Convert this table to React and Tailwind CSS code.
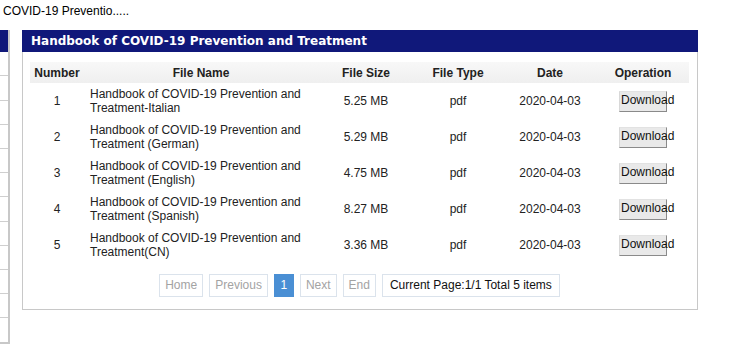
import React from "react";

const rows = [
  { n: 1, name: "Handbook of COVID-19 Prevention and Treatment-Italian", size: "5.25 MB" },
  { n: 2, name: "Handbook of COVID-19 Prevention and Treatment (German)", size: "5.29 MB" },
  { n: 3, name: "Handbook of COVID-19 Prevention and Treatment (English)", size: "4.75 MB" },
  { n: 4, name: "Handbook of COVID-19 Prevention and Treatment (Spanish)", size: "8.27 MB" },
  { n: 5, name: "Handbook of COVID-19 Prevention and Treatment(CN)", size: "3.36 MB" },
];

const sideRows = [
  "h-[24px]", "h-[25px]", "h-[24px]", "h-[24px]", "h-[24px]", "h-[24px]",
  "h-[25px]", "h-[24px]", "h-[24px]", "h-[24px]", "h-[24px]",
];

const cols = "grid grid-cols-[54px_234px_96px_88px_96px_90px]";

export default function App() {
  return (
    <div className="w-[745px] h-[346px] bg-white overflow-hidden text-[12px] text-[#222] font-['Liberation_Sans',Arial,sans-serif]">
      <div className="h-[30px] pl-[3px] pt-[4px] leading-[14px] text-black">COVID-19 Preventio.....</div>
      <div className="flex items-start">
        <div className="w-[10px] border-r-2 border-b-2 border-[#c8c8c8]">
          <div className="h-[22px] bg-[#10187a]" />
          {sideRows.map((h, i) => (
            <div key={i} className={`${h} border-b border-[#cfcfcf]`} />
          ))}
          <div className="h-[24px]" />
        </div>
        <div className="ml-[12px] w-[676px]">
          <div className="h-[22px] bg-[#10187a] text-white font-bold text-[12px] leading-[22px] pl-[9px] font-['DejaVu_Sans',Verdana,sans-serif]">
            Handbook of COVID-19 Prevention and Treatment
          </div>
          <div className="border border-t-0 border-[#c8c8c8] pl-[7px] pr-[8px] pt-[10px] pb-[12px]">
            <div className={`${cols} h-[21px] items-center bg-gradient-to-b from-[#f8f8f8] to-[#efefef] font-bold text-center`}>
              <div>Number</div>
              <div>File Name</div>
              <div>File Size</div>
              <div>File Type</div>
              <div>Date</div>
              <div>Operation</div>
            </div>
            {rows.map((r) => (
              <div key={r.n} className={`${cols} h-[36px] items-center text-center leading-[14px]`}>
                <div>{r.n}</div>
                <div className="text-left pl-[6px] pr-[14px]">{r.name}</div>
                <div>{r.size}</div>
                <div>pdf</div>
                <div>2020-04-03</div>
                <div className="flex justify-center">
                  <div className="w-[48px] h-[21px] bg-[#e9e9e9] border border-t-[#e2e2e2] border-l-[#d8d8d8] border-r-[#8a8a8a] border-b-[#8a8a8a] text-left pl-[1px] leading-[17px] whitespace-nowrap text-[#111]">
                    Download
                  </div>
                </div>
              </div>
            ))}
            <div className="mt-[11px] flex justify-center gap-[6px] text-[#a3a3a3]">
              <div className="h-[23px] leading-[21px] px-[5px] border border-[#dbe3ec]">Home</div>
              <div className="h-[23px] leading-[21px] px-[5px] border border-[#dbe3ec]">Previous</div>
              <div className="h-[23px] leading-[21px] w-[20px] text-center bg-[#4a8fd4] border border-[#4a8fd4] text-white">1</div>
              <div className="h-[23px] leading-[21px] px-[5px] border border-[#dbe3ec]">Next</div>
              <div className="h-[23px] leading-[21px] px-[5px] border border-[#dbe3ec]">End</div>
              <div className="h-[23px] leading-[21px] px-[7px] border border-[#dbe3ec] text-[#111]">Current Page:1/1 Total 5 items</div>
            </div>
          </div>
        </div>
      </div>
    </div>
  );
}
